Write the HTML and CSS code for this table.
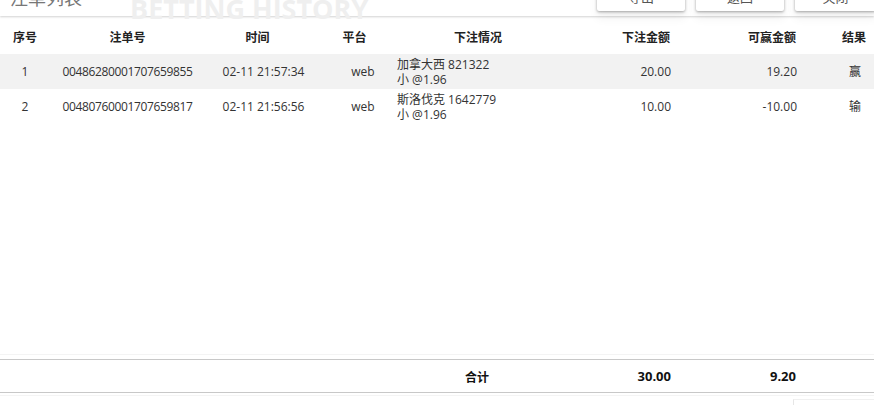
FILE: index.html
```html
<!DOCTYPE html>
<html lang="zh">
<head>
<meta charset="utf-8">
<link rel="stylesheet" href="styles.css">
</head>
<body>
<div class="page">
  <header class="topbar">
    <div class="title">注单列表</div>
    <div class="watermark">BETTING HISTORY</div>
    <div class="actions">
      <button class="btn">导出</button>
      <button class="btn">返回</button>
      <button class="btn">关闭</button>
    </div>
  </header>
  <div class="tablewrap">
    <table class="bets">
      <colgroup>
        <col class="c1"><col class="c2"><col class="c3"><col class="c4"><col class="c5"><col class="c6"><col class="c7"><col class="c8">
      </colgroup>
      <thead>
        <tr>
          <th class="ctr">序号</th>
          <th class="ctr">注单号</th>
          <th class="ctr t-time">时间</th>
          <th class="ctr t-plat">平台</th>
          <th class="ctr t-info">下注情况</th>
          <th class="num">下注金额</th>
          <th class="num">可赢金额</th>
          <th class="res">结果</th>
        </tr>
      </thead>
      <tbody>
        <tr class="odd">
          <td class="ctr">1</td>
          <td class="ctr id">00486280001707659855</td>
          <td class="ctr d-time">02-11 21:57:34</td>
          <td class="ctr d-plat">web</td>
          <td class="info"><div>加拿大西 821322</div><div>小 @1.96</div></td>
          <td class="num">20.00</td>
          <td class="num">19.20</td>
          <td class="res">赢</td>
        </tr>
        <tr>
          <td class="ctr">2</td>
          <td class="ctr id">00480760001707659817</td>
          <td class="ctr d-time">02-11 21:56:56</td>
          <td class="ctr d-plat">web</td>
          <td class="info"><div>斯洛伐克 1642779</div><div>小 @1.96</div></td>
          <td class="num">10.00</td>
          <td class="num">-10.00</td>
          <td class="res">输</td>
        </tr>
      </tbody>
    </table>
  </div>
  <table class="bets total">
    <colgroup>
      <col class="c1"><col class="c2"><col class="c3"><col class="c4"><col class="c5"><col class="c6"><col class="c7"><col class="c8">
    </colgroup>
    <tr>
      <td></td><td></td><td></td><td></td>
      <td class="sumlabel">合计</td>
      <td class="num">30.00</td>
      <td class="num">9.20</td>
      <td></td>
    </tr>
  </table>
  <div class="bottom">
    <div class="ghostbtn"></div>
  </div>
</div>
</body>
</html>
```
FILE: styles.css
```css
html, body {
  margin: 0;
  padding: 0;
  background: #fff;
}
body {
  font-family: "Open Sans", "Noto Sans CJK SC", sans-serif;
  font-size: 12px;
  color: #333;
  width: 874px;
  height: 405px;
  overflow: hidden;
}
.page {
  display: flex;
  flex-direction: column;
  height: 405px;
}
.topbar {
  position: relative;
  display: flex;
  align-items: flex-end;
  height: 40px;
  margin-top: -24px;
  flex: none;
  background: #fff;
  box-shadow: 0 1px 2px rgba(0, 0, 0, 0.18);
  z-index: 2;
}
.title {
  font-family: "Noto Sans CJK SC", sans-serif;
  font-size: 18px;
  color: #777;
  padding-left: 10px;
  line-height: 18px;
  margin-bottom: 10px;
  width: 120px;
}
.watermark {
  font-family: "Open Sans", sans-serif;
  font-weight: 700;
  font-size: 27px;
  letter-spacing: 0;
  color: #efefef;
  line-height: 27px;
  margin-bottom: -6px;
}
.actions {
  margin-left: auto;
  display: flex;
  gap: 11px;
  align-self: flex-start;
  margin-right: -2px;
}
.btn {
  width: 88px;
  height: 35px;
  border: none;
  background: #fff;
  font-family: "Noto Sans CJK SC", sans-serif;
  font-size: 13px;
  color: #555;
  border-radius: 2px;
  box-shadow: 0 1px 3px rgba(0, 0, 0, 0.35), 0 8px 10px rgba(0, 0, 0, 0.05);
  padding: 0;
  padding-top: 6px;
  line-height: 13px;
}
.btn:last-child {
  width: 81px;
}
.tablewrap {
  flex: 1;
  margin-top: 2px;
  border-bottom: 1px solid #f4f4f4;
  margin-bottom: 4px;
}
.bets {
  width: 874px;
  border-collapse: collapse;
  table-layout: fixed;
}
col.c1 { width: 50px; }
col.c2 { width: 155px; }
col.c3 { width: 115px; }
col.c4 { width: 72px; }
col.c5 { width: 172px; }
col.c6 { width: 118px; }
col.c7 { width: 126px; }
col.c8 { width: 66px; }
.bets th {
  font-family: "Noto Sans CJK SC", sans-serif;
  font-weight: 700;
  font-size: 12px;
  color: #222;
  height: 36px;
  padding: 0;
}
.bets td {
  height: 35px;
  padding: 0;
  line-height: 15px;
  color: #333;
}
.bets tbody tr.odd td {
  background: #f2f2f2;
}
.ctr { text-align: center; }
.id { letter-spacing: -0.35px; }
.t-time { padding-right: 10px !important; }
.d-time { padding-left: 2px !important; }
.t-plat { padding-right: 3px !important; }
.d-plat { padding-left: 14px !important; }
.t-info { padding-left: 0 !important; }
.info {
  text-align: left;
  padding-left: 5px !important;
}
.num {
  text-align: right;
  padding-right: 11px !important;
}
.bets th.num { padding-right: 12px !important; }
.res {
  text-align: right;
  padding-right: 13px !important;
}
.bets th.res { padding-right: 8px !important; }
.total {
  border-top: 1px solid #c8c8c8;
  border-bottom: 1px solid #c8c8c8;
  flex: none;
}
.total td {
  height: 32px;
  font-weight: 700;
  font-size: 13px;
  color: #111;
}
.total .num { padding-right: 11px !important; }
.total .num:nth-child(7) { padding-right: 12px !important; }
.sumlabel {
  font-family: "Noto Sans CJK SC", sans-serif;
  font-size: 12px !important;
  text-align: left;
  padding-left: 73px !important;
}
.bottom {
  height: 9px;
  flex: none;
  display: flex;
  justify-content: flex-end;
  border-top: 1px solid #f4f4f4;
  margin-top: 2px;
}
.ghostbtn {
  width: 80px;
  margin-top: 3px;
  border-top: 1px solid #f0f0f0;
  border-left: 1px solid #e6e6e6;
}
```
